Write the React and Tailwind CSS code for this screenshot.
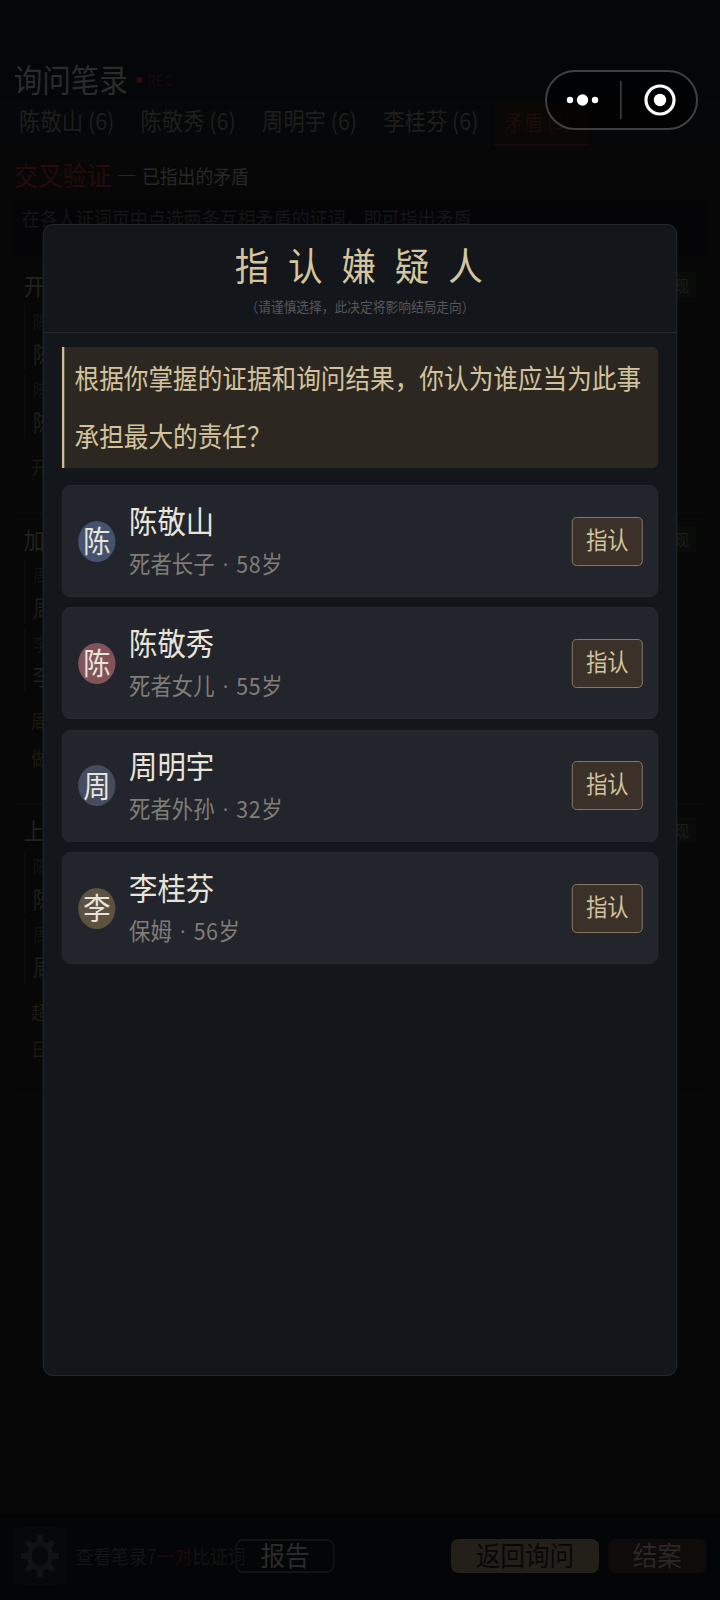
const tabs = ["陈敬山 (6)", "陈敬秀 (6)", "周明宇 (6)", "李桂芬 (6)"];

const suspects = [
  { name: "陈敬山", role: "死者长子", age: "58岁", avatar: "bg-[#43536f]" },
  { name: "陈敬秀", role: "死者女儿", age: "55岁", avatar: "bg-[#82535a]" },
  { name: "周明宇", role: "死者外孙", age: "32岁", avatar: "bg-[#454c5e]" },
  { name: "李桂芬", role: "保姆", age: "56岁", avatar: "bg-[#5d5142]" },
];

// Contradictions that have been pointed out so far
const contradictions = [
  { title: "开", quotes: ["陈", "陈"], notes: ["开"], height: "h-[254px]" },
  { title: "加", quotes: ["周", "李"], notes: ["周", "做"], height: "h-[291px]" },
  { title: "上", quotes: ["陈", "周"], notes: ["超", "日"], height: "h-[291px]" },
];

const Contradiction = ({ item }) => (
  <div className={`shrink-0 border border-[#0a0a09] px-[9px] pt-[7px] ${item.height}`}>
    <div className="mb-[4px] flex h-[35px] items-center justify-between">
      <span className="text-[23px] leading-[30px] text-[#22221e]">{item.title}</span>
      <span className="bg-[#090c09] px-[8px] text-[16px] leading-[26px] text-[#1a1e1a]">
        发现
      </span>
    </div>
    {item.quotes.map((name, i) => (
      <div key={i} className="mb-[4px] h-[64px] border-l-2 border-[#0d0d0d] pl-[8px]">
        <div className="text-[18px] leading-[30px] text-[#131312]">{name}</div>
        <div className="text-[23px] leading-[35px] text-[#1e1e1c]">{name}</div>
      </div>
    ))}
    <div className="mt-[10px] pl-[8px] text-[19px] leading-[37px] text-[#1d1912]">
      {item.notes.map((note) => (
        <div key={note}>{note}</div>
      ))}
    </div>
  </div>
);

const GearIcon = () => (
  <svg viewBox="0 0 44 44" className="h-[44px] w-[44px]" fill="none" stroke="#101214">
    <circle cx="22" cy="22" r="12" strokeWidth="5.5" />
    <g fill="#101214" stroke="none">
      {[0, 45, 90, 135, 180, 225, 270, 315].map((deg) => (
        <path key={deg} d="M18 9 L19.5 1 H24.5 L26 9 Z" transform={`rotate(${deg} 22 22)`} />
      ))}
    </g>
  </svg>
);

const Transcript = () => (
  <div className="flex h-[1600px] flex-col bg-[#070707]">
    {/* Header */}
    <header className="flex h-[101px] items-end gap-[9px] bg-[#040608] pl-[15px]">
      <h1 className="text-[31.4px] leading-[44px] text-[#2a2b2b]">询问笔录</h1>
      <span className="flex items-center gap-[5px] pb-[10px] text-[15px] leading-[22px] text-[#180909]">
        <span className="h-[6px] w-[7px] rounded-full bg-[#260b0b]" />
        REC
      </span>
    </header>
    <nav className="flex h-[44px] shrink-0 bg-[#050709]">
      {tabs.map((tab) => (
        <span
          key={tab}
          className="w-[133.5px] shrink-0 pl-[21px] text-[23.5px] leading-[38px] whitespace-nowrap text-[#1e1f1c]"
        >
          {tab}
        </span>
      ))}
      <span className="ml-[9px] h-[45px] w-[105px] border-b-2 border-[#190a09] bg-[#0a0804] pl-[12px] text-[21px] leading-[40px] whitespace-nowrap text-[#1e0b09]">
        矛盾 (3)
      </span>
    </nav>

    <div className="flex h-[56px] shrink-0 items-center pt-[5px] pl-[15px]">
      <span className="text-[26.8px] text-[#260b0a]">交叉验证</span>
      <span className="ml-[8px] h-[1.5px] w-[19px] bg-[#262626]" />
      <span className="ml-[7px] text-[19.6px] text-[#272727]">已指出的矛盾</span>
    </div>
    <p className="mx-[14px] h-[55px] shrink-0 bg-[#050507] pl-[10px] text-[19.8px] leading-[34px] text-[#161616]">
      在各人证词页中点选两条互相矛盾的证词，即可指出矛盾
    </p>
    <main className="flex flex-col px-[16px] pt-[3px]">
      {contradictions.map((item) => (
        <Contradiction key={item.title} item={item} />
      ))}
    </main>

    {/* Bottom bar */}
    <footer className="mt-auto flex h-[86px] shrink-0 items-center bg-[#030507] pr-[15px] pb-[2px] pl-[15px]">
      <div className="flex h-[58px] w-[58px] items-center justify-center rounded-md bg-[#06080a]">
        <GearIcon />
      </div>
      <span className="ml-[10px] w-[176px] text-[19.6px] whitespace-nowrap text-[#131414]">
        查看笔录7<span className="text-[#1b0a0a]">一对</span>比证词
      </span>
      <span className="h-[34px] w-[109px] rounded-lg border-2 border-[#101213] text-center text-[27px] leading-[28px] text-[#2a2b2b]">
        报告
      </span>
      <span className="ml-auto h-[34px] w-[163px] rounded-lg bg-[#231f19] text-center text-[27px] leading-[32px] text-[#080808]">
        返回询问
      </span>
      <span className="ml-[10px] h-[34px] w-[108px] rounded-lg bg-[#0e0b0a] text-center text-[27px] leading-[32px] text-[#2a2827]">
        结案
      </span>
    </footer>
  </div>
);

const AccuseDialog = () => (
  <section className="absolute top-[224px] left-[47px] h-[1152px] w-[698px] overflow-hidden rounded-[11px] border border-[#252b2f] bg-[#13171b]">
    <div className="flex h-[108px] flex-col items-center border-b border-[#21282c]">
      <h2 className="pt-[10px] pl-[18px] text-[38px] leading-[58px] tracking-[20.7px] text-[#d4c5a0]">
        指认嫌疑人
      </h2>
      <p className="pt-[1px] text-[14px] leading-[24px] text-[#53565a]">
        （请谨慎选择，此决定将影响结局走向）
      </p>
    </div>

    <div className="px-[20px] pt-[14px]">
      <p className="h-[121px] rounded-r-md border-l-[3px] border-[#cdbb93] bg-[#2c2821] pt-[2px] pl-[11px] text-[27.1px] leading-[58px] text-[#d2c39e]">
        根据你掌握的证据和询问结果，你认为谁应当为此事
        <br />
        承担最大的责任？
      </p>

      <div className="mt-[17px] flex flex-col gap-[10.4px]">
        {suspects.map((suspect) => (
          <div
            key={suspect.name}
            className="flex h-[112px] items-center rounded-[9px] border border-[#272b30] bg-[#22252b] px-[16px]"
          >
            <div
              className={`ml-[1px] flex h-[41px] w-[41px] items-center justify-center rounded-full pb-[4px] text-[30px] leading-none text-[#e8e4da] ${suspect.avatar}`}
            >
              {suspect.name[0]}
            </div>
            <div className="ml-[15px] flex-1 pt-[2px]">
              <div className="text-[31.2px] leading-[42px] text-[#e8e4da]">{suspect.name}</div>
              <div className="flex text-[23.5px] leading-[44px] text-[#807d78]">
                {suspect.role}
                <span className="w-[24px] text-center font-['Liberation_Sans',sans-serif]">·</span>
                <span className="tracking-[0.6px]">{suspect.age}</span>
              </div>
            </div>
            <button className="h-[49px] w-[78px] rounded-[5px] border border-[#8a7c66] bg-[#3b3128] pb-[4px] text-[23.5px] leading-[43px] text-[#d2c39e]">
              指认
            </button>
          </div>
        ))}
      </div>
    </div>
  </section>
);

// Mini program menu capsule, floats over everything
const Capsule = () => (
  <div className="absolute top-[70px] left-[545px] flex h-[60px] w-[153px] items-center rounded-full border-2 border-[#404040] bg-black/60">
    <svg viewBox="0 0 149 56" className="h-[56px] w-[149px]" fill="white">
      <circle cx="23" cy="28" r="3.2" />
      <circle cx="35.5" cy="28" r="5.7" />
      <circle cx="48" cy="28" r="3.2" />
      <rect x="73" y="9" width="1.6" height="38" fill="#404040" />
      <circle cx="113" cy="28" r="14" fill="none" stroke="white" strokeWidth="3.2" />
      <circle cx="113" cy="28" r="6.2" />
    </svg>
  </div>
);

const App = () => {
  return (
    <div className="relative h-[1600px] w-[720px] overflow-hidden bg-black font-['Noto_Sans_CJK_SC',sans-serif]">
      {/* The game stage is 792 wide and squeezed to the screen */}
      <div className="relative h-[1600px] w-[792px] origin-top-left scale-x-[0.90909]">
        <Transcript />
        <AccuseDialog />
      </div>
      <Capsule />
    </div>
  );
};

export default App;
